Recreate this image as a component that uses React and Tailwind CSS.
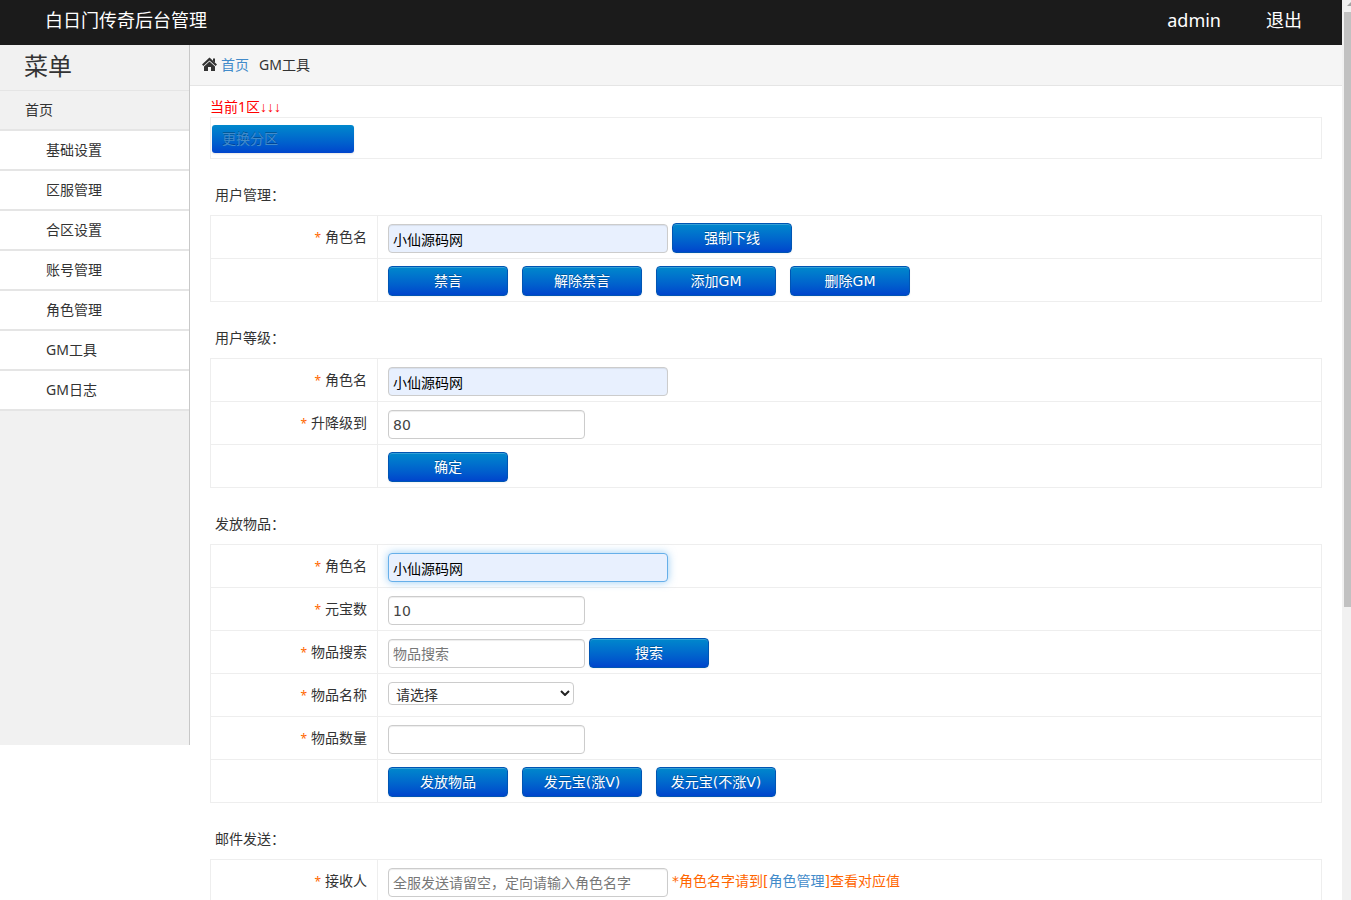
import { useState } from 'react'

const menu = ['基础设置', '区服管理', '合区设置', '账号管理', '角色管理', 'GM工具', 'GM日志']

function Btn({ children, onClick }) {
  return (
    <button
      type="button"
      onClick={onClick}
      className="h-[30px] w-[120px] shrink-0 cursor-pointer rounded border border-[#0055b3] bg-linear-to-b from-[#0088cc] to-[#0044cc] font-['DejaVu_Sans','Noto_Sans_CJK_SC',sans-serif] text-sm leading-5 text-white shadow-[inset_0_1px_0_rgba(255,255,255,0.2),0_1px_2px_rgba(0,0,0,0.05)] [text-shadow:0_-1px_0_rgba(0,0,0,0.25)]"
    >
      {children}
    </button>
  )
}

const inputBase = "mt-px h-[29px] rounded border px-1 font-['DejaVu_Sans','Noto_Sans_CJK_SC',sans-serif] text-sm outline-none placeholder:text-[#777] "
const plain = 'border-[#ccc] bg-white text-[#444] shadow-[inset_0_1px_1px_rgba(0,0,0,0.075)] '
const filled = 'border-[#ccc] bg-[#e8f0fe] text-black shadow-[inset_0_1px_1px_rgba(0,0,0,0.075)] '
const active = 'border-[#66afe9] bg-[#e8f0fe] text-black shadow-[0_0_8px_rgba(82,168,236,0.6)] '

function Field({ id, look = plain, wide, value = '', placeholder }) {
  const [val, setVal] = useState(value)
  return (
    <input
      id={id}
      type="text"
      value={val}
      placeholder={placeholder}
      onChange={(e) => setVal(e.target.value)}
      className={inputBase + look + (wide ? 'w-[280px]' : 'w-[197px]')}
    />
  )
}

function Section({ title, children }) {
  return (
    <section>
      <h2 className="h-14 px-[5px] pt-[26px] text-sm leading-5">{title}</h2>
      <div className="border border-b-0 border-[#eee]">{children}</div>
    </section>
  )
}

function Row({ label, id, gap = 'gap-1', children }) {
  return (
    <div className="flex h-[43px] border-b border-[#eee]">
      <div className="w-[167px] shrink-0 border-r border-[#eee] pt-[11px] pr-[10px] text-right text-sm leading-5">
        {label && (
          <label htmlFor={id}>
            <span className="mr-1 text-xs text-[#f60]">*</span>
            {label}
          </label>
        )}
      </div>
      <div className={'flex items-start pt-[7px] pl-[10px] ' + gap}>{children}</div>
    </div>
  )
}

function Sidebar() {
  return (
    <nav className="h-[700px] w-[190px] shrink-0 border-r border-[#c8c8c8] bg-[#f1f1f1] text-sm">
      <h1 className="h-[46px] border-b border-[#e5e5e5] pl-6 text-2xl leading-[42px]">菜单</h1>
      <a href="#home" className="block h-10 border-b-2 border-[#e5e5e5] pl-[25px] leading-[38px]">首页</a>
      <ul>
        {menu.map((m) => (
          <li key={m} className="h-10 border-b-2 border-[#e5e5e5] bg-white leading-[38px]">
            <a href="#menu" className="block pl-[46px]">{m}</a>
          </li>
        ))}
      </ul>
    </nav>
  )
}

export default function App() {
  return (
    <div className="flex h-screen overflow-hidden bg-white font-['Noto_Sans','Noto_Sans_CJK_SC',sans-serif] text-[#333]">
      <div className="min-w-0 flex-1">
        <header className="flex h-[45px] bg-[#1b1b1b] pr-10 pl-[45px] text-lg leading-10 text-white">
          <a href="#top" className="mr-auto">白日门传奇后台管理</a>
          <a href="#admin" className="mr-[45px]">admin</a>
          <a href="#logout">退出</a>
        </header>

        <div className="flex items-start">
          <Sidebar />
          <main className="min-w-0 flex-1">
            <div className="flex h-[41px] items-center border-b border-[#e5e5e5] bg-[#f5f5f5] pl-3 text-sm">
              <svg width="15" height="16" viewBox="0 0 15 16" className="mr-1" fill="#333">
                <path d="M7.5 0.6 L15 7.6 L13.6 9 L7.5 3.4 L1.4 9 L0 7.6 Z" />
                <path d="M7.5 4.4 L13 9.4 V14 H9 V10 H6 V14 H2 V9.4 Z" />
                <path d="M11 1.6 H13 V5.8 L11 4 Z" />
              </svg>
              <a href="#home" className="mr-[10px] text-[#428bca]">首页</a>
              <span>GM工具</span>
            </div>

            <div className="px-5 pt-[11px]">
              <p className="text-sm leading-5 text-[#f00]">
                当前1区<span className="font-['Liberation_Sans',sans-serif]">↓↓↓</span>
              </p>
              <div className="h-[42px] border border-[#eee] pt-[7px] pl-px">
                <a
                  href="#zone"
                  className="block h-7 w-[142px] rounded-[3px] bg-linear-to-b from-[#0088cc] to-[#0044cc] pl-[10px] text-sm leading-7 text-[#428bca] shadow-[0_1px_2px_rgba(0,0,0,0.1)] [text-shadow:0_-1px_0_rgba(0,0,0,0.25)]"
                >
                  更换分区
                </a>
              </div>

              <Section title="用户管理：">
                <Row label="角色名" id="user-name">
                  <Field id="user-name" look={filled} wide value="小仙源码网" />
                  <Btn>强制下线</Btn>
                </Row>
                <Row gap="gap-[14px]">
                  <Btn>禁言</Btn>
                  <Btn>解除禁言</Btn>
                  <Btn>添加GM</Btn>
                  <Btn>删除GM</Btn>
                </Row>
              </Section>

              <Section title="用户等级：">
                <Row label="角色名" id="level-name">
                  <Field id="level-name" look={filled} wide value="小仙源码网" />
                </Row>
                <Row label="升降级到" id="level">
                  <Field id="level" value="80" />
                </Row>
                <Row>
                  <Btn>确定</Btn>
                </Row>
              </Section>

              <Section title="发放物品：">
                <Row label="角色名" id="item-user">
                  <Field id="item-user" look={active} wide value="小仙源码网" />
                </Row>
                <Row label="元宝数" id="gold">
                  <Field id="gold" value="10" />
                </Row>
                <Row label="物品搜索" id="search">
                  <Field id="search" placeholder="物品搜索" />
                  <Btn>搜索</Btn>
                </Row>
                <Row label="物品名称" id="item">
                  <div className="relative mt-px">
                    <select
                      id="item"
                      className="block h-[23px] w-[186px] appearance-none rounded border border-[#ccc] bg-white pt-0.5 pl-[7px] text-sm leading-5 text-[#333]"
                    >
                      <option>请选择</option>
                    </select>
                    <svg width="10" height="6" viewBox="0 0 10 6" className="pointer-events-none absolute top-2 right-1" fill="none" stroke="#222" strokeWidth="2">
                      <path d="M1 1 L5 5 L9 1" />
                    </svg>
                  </div>
                </Row>
                <Row label="物品数量" id="count">
                  <Field id="count" />
                </Row>
                <Row gap="gap-[14px]">
                  <Btn>发放物品</Btn>
                  <Btn>发元宝(涨V)</Btn>
                  <Btn>发元宝(不涨V)</Btn>
                </Row>
              </Section>

              <Section title="邮件发送：">
                <Row label="接收人" id="mail-to">
                  <Field id="mail-to" wide placeholder="全服发送请留空，定向请输入角色名字" />
                  <p className="pt-1 font-['DejaVu_Sans','Noto_Sans_CJK_SC',sans-serif] text-sm leading-5 text-[#f60]">
                    *角色名字请到[<a href="#role" className="text-[#428bca]">角色管理</a>]查看对应值
                  </p>
                </Row>
              </Section>
            </div>
          </main>
        </div>
      </div>

      {/* scroll track */}
      <div className="w-[9px] shrink-0 overflow-hidden bg-[#f1f1f1] pl-0.5">
        <svg width="12" height="12" viewBox="0 0 12 12" className="max-w-none" fill="#a3a3a3">
          <path d="M3 6 L7 2 L11 6 Z" />
        </svg>
        <div className="h-[595px] bg-[#c1c1c1]" />
      </div>
    </div>
  )
}
